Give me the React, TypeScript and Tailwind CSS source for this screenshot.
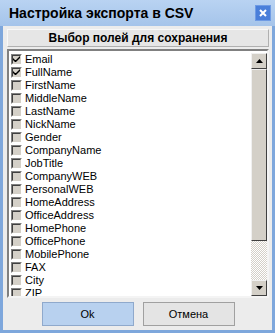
import * as React from "react";

const fields = [
  "Email",
  "FullName",
  "FirstName",
  "MiddleName",
  "LastName",
  "NickName",
  "Gender",
  "CompanyName",
  "JobTitle",
  "CompanyWEB",
  "PersonalWEB",
  "HomeAddress",
  "OfficeAddress",
  "HomePhone",
  "OfficePhone",
  "MobilePhone",
  "FAX",
  "City",
  "ZIP",
];

const checkedFields = ["Email", "FullName"];

function CheckBox({ checked }: { checked: boolean }) {
  return (
    <div className="w-[11px] h-[11px] shrink-0 border border-t-[#808080] border-l-[#808080] border-b-white border-r-white">
      <div className="w-full h-full bg-[#d4d0c8] border border-t-[#404040] border-l-[#404040] border-b-[#d4d0c8] border-r-[#d4d0c8] flex items-center justify-center">
        {checked && (
          <svg width="7" height="7" viewBox="0 0 7 7">
            <path d="M0 2 L0 4 L2 6 L3 6 L7 2 L7 0 L3 4 L2 4 Z" fill="#000" />
          </svg>
        )}
      </div>
    </div>
  );
}

function ScrollButton({ up }: { up: boolean }) {
  return (
    <div className="w-[16px] h-[16px] shrink-0 bg-[#d4d0c8] border border-t-[#f0f0f0] border-l-[#f0f0f0] border-b-[#404040] border-r-[#404040] flex items-center justify-center">
      <svg width="7" height="4" viewBox="0 0 7 4">
        {up ? <path d="M3.5 0 L7 4 L0 4 Z" fill="#000" /> : <path d="M0 0 L7 0 L3.5 4 Z" fill="#000" />}
      </svg>
    </div>
  );
}

export default function App() {
  return (
    <div
      className="w-[275px] h-[333px] flex flex-col bg-[#7ea7dc] overflow-hidden"
      style={{ fontFamily: '"Liberation Sans", Arial, sans-serif' }}
    >
      {/* Title bar */}
      <div className="h-[26px] shrink-0 flex items-center justify-between pl-[9px] pr-[4px] bg-gradient-to-b from-[#b9d3f2] to-[#a5c4ea]">
        <span className="text-[14px] font-bold text-black leading-none">Настройка экспорта в CSV</span>
        <div className="w-[16px] h-[16px] bg-[#4a7fda] border border-[#6f9be4] flex items-center justify-center mt-[-1px]">
          <svg width="8" height="8" viewBox="0 0 8 8">
            <path d="M1 1 L7 7 M7 1 L1 7" stroke="#fff" strokeWidth="2" />
          </svg>
        </div>
      </div>

      {/* Body */}
      <div className="flex-1 mx-[3px] mb-[3px] bg-[#ececec] flex flex-col pt-[3px] pl-[4px] pr-[3px]">
        <div className="h-[18px] shrink-0 bg-[#e6e6e6] border border-t-[#f8f8f8] border-l-[#f8f8f8] border-b-[#b0b0b0] border-r-[#b0b0b0] flex items-center justify-center">
          <span className="text-[12px] font-bold text-black leading-none">Выбор полей для сохранения</span>
        </div>

        {/* List box */}
        <div className="mt-[2px] h-[249px] shrink-0 bg-white border-2 border-t-[#808080] border-l-[#808080] border-b-[#f4f4f4] border-r-[#f4f4f4] flex overflow-hidden">
          <div className="flex-1 flex flex-col pt-[2px] pl-[2px] overflow-hidden">
            {fields.map((f) => (
              <div key={f} className="h-[13px] shrink-0 flex items-center gap-[3px]">
                <CheckBox checked={checkedFields.includes(f)} />
                <span className="text-[11px] leading-none text-black">{f}</span>
              </div>
            ))}
          </div>
          <div className="w-[16px] flex flex-col pt-[2px]">
            <ScrollButton up />
            <div className="h-[172px] shrink-0 bg-[#d4d0c8] border border-t-[#f0f0f0] border-l-[#f0f0f0] border-b-[#404040] border-r-[#404040]" />
            <div className="flex-1 bg-[repeating-conic-gradient(#d4d0c8_0_25%,#ffffff_0_50%)] bg-[length:2px_2px]" />
            <ScrollButton up={false} />
          </div>
        </div>

        {/* Buttons */}
        <div className="mt-[4px] flex justify-center gap-[9px]">
          <button className="w-[92px] h-[24px] bg-[#b8d1ef] border border-[#8fa9cc] text-[11px] text-black">
            Ok
          </button>
          <button className="w-[92px] h-[24px] bg-[#e4e4e4] border border-[#a0a0a0] text-[11px] text-black">
            Отмена
          </button>
        </div>
      </div>
    </div>
  );
}
